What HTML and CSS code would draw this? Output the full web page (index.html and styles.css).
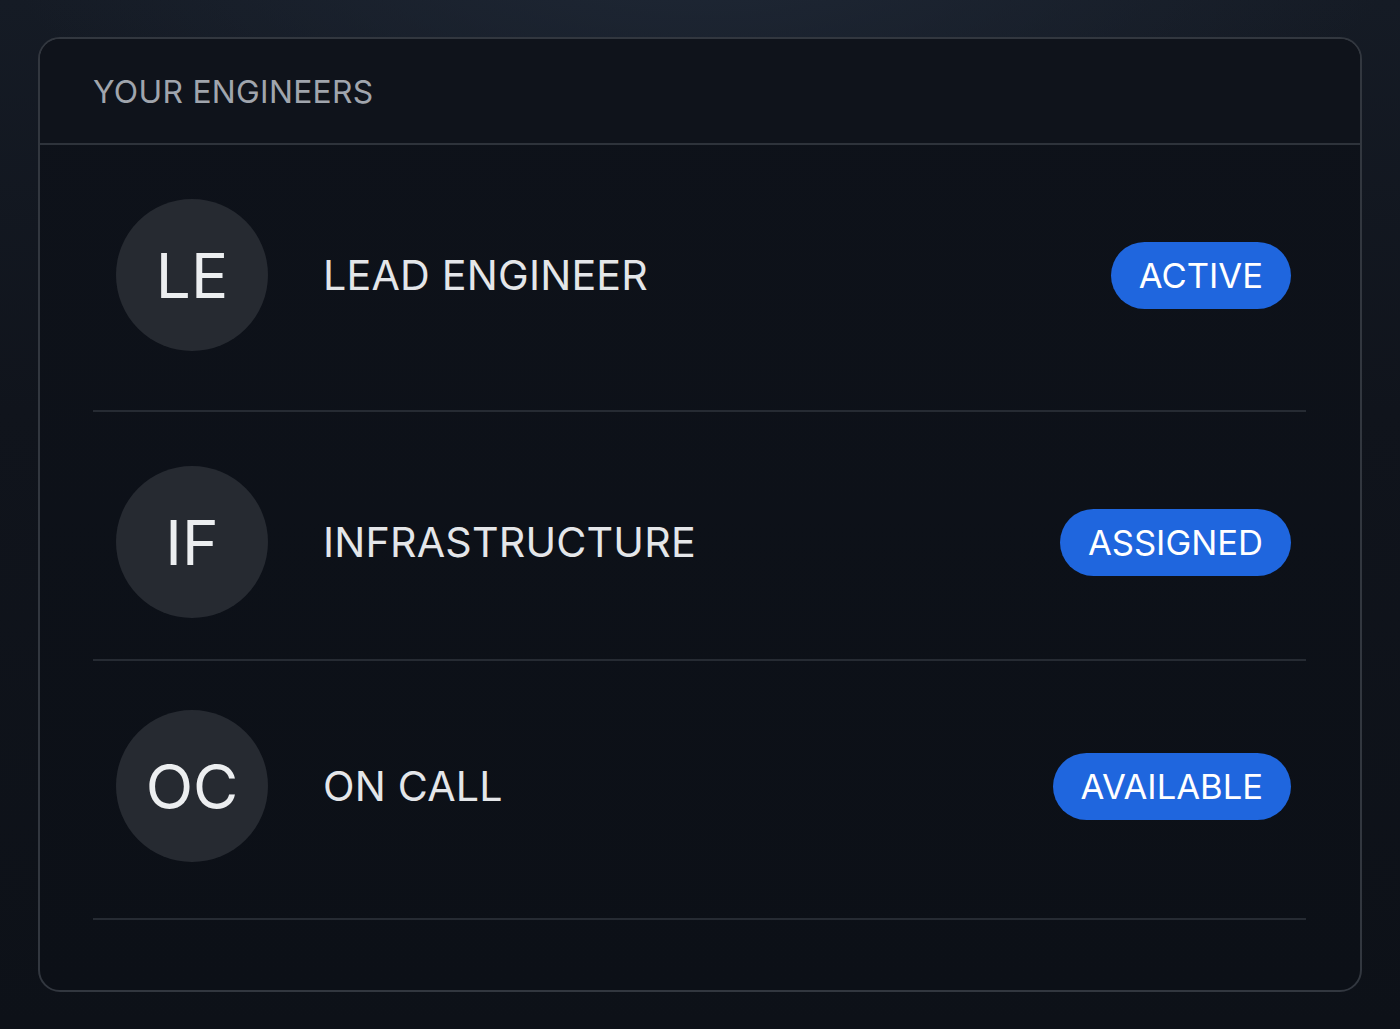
FILE: index.html
```html
<!DOCTYPE html>
<html lang="en">
<head>
<meta charset="utf-8">
<title>Your Engineers</title>
<link rel="stylesheet" href="styles.css">
</head>
<body>
<main class="page">
  <section class="card">
    <header class="card-header">
      <h2 class="card-title">YOUR ENGINEERS</h2>
    </header>
    <ul class="list">
      <li class="row row-1">
        <div class="avatar">LE</div>
        <div class="name">LEAD ENGINEER</div>
        <span class="badge">ACTIVE</span>
      </li>
      <li class="row row-2">
        <div class="avatar">IF</div>
        <div class="name">INFRASTRUCTURE</div>
        <span class="badge">ASSIGNED</span>
      </li>
      <li class="row row-3">
        <div class="avatar">OC</div>
        <div class="name">ON CALL</div>
        <span class="badge">AVAILABLE</span>
      </li>
    </ul>
  </section>
</main>
</body>
</html>
```
FILE: styles.css
```css
* { box-sizing: border-box; }
html, body { margin: 0; padding: 0; }
body {
  width: 1400px;
  height: 1029px;
  overflow: hidden;
  font-family: Inter, "Noto Sans", sans-serif;
  background:
    radial-gradient(ellipse 700px 260px at 50% -60px, #1f2836 0%, rgba(31,40,54,0) 100%),
    linear-gradient(180deg, #151b25 0%, #10141c 40%, #0d1118 100%);
  color: #e6e8eb;
}
.page {
  padding: 37px 38px 0 38px;
}
.card {
  height: 955px;
  border: 2px solid #32373f;
  border-radius: 22px;
  background: linear-gradient(180deg, #0e121a 0%, #0c1017 100%);
  overflow: hidden;
}
.card-header {
  height: 106px;
  border-bottom: 2px solid #2e333b;
  display: flex;
  align-items: center;
  padding-left: 53px;
  background: #0f131b;
}
.card-title {
  margin: 0;
  font-weight: 400;
  font-size: 31.8px;
  letter-spacing: 0.3px;
  color: #a0a5ad;
}
.list {
  list-style: none;
  margin: 0;
  padding: 0 54px 0 53px;
}
.row {
  display: flex;
  align-items: center;
  padding: 0 15px 0 23px;
  border-bottom: 2px solid #262b33;
}
.row-1 { padding-top: 54px; padding-bottom: 59px; }
.row-2 { padding-top: 54px; padding-bottom: 41px; }
.row-3 { padding-top: 49px; padding-bottom: 56px; }
.avatar {
  width: 152px;
  height: 152px;
  border-radius: 50%;
  background: #262a31;
  display: flex;
  align-items: center;
  justify-content: center;
  font-size: 62px;
  font-weight: 400;
  color: #eceef0;
  flex: none;
}
.name {
  margin-left: 55px;
  flex: 1;
  font-size: 41.2px;
  font-weight: 400;
  color: #e4e6e9;
  letter-spacing: 0.2px;
}
.badge {
  flex: none;
  height: 67px;
  padding: 0 28px;
  border-radius: 34px;
  background: #1f66de;
  color: #ffffff;
  font-size: 34.6px;
  font-weight: 400;
  display: flex;
  align-items: center;
}
```
